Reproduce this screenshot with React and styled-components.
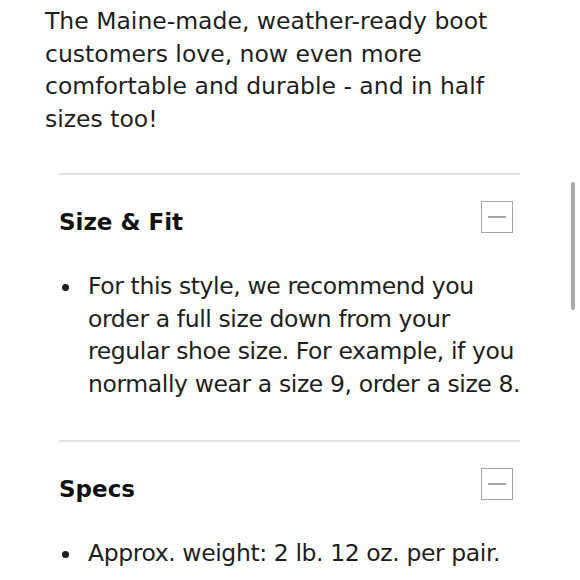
import React from "react";
import styled, { createGlobalStyle } from "styled-components";

const GlobalStyle = createGlobalStyle`
  html, body {
    margin: 0;
    padding: 0;
    background: #fff;
    overflow: hidden;
  }
  body {
    font-family: "DejaVu Sans", "Liberation Sans", sans-serif;
    color: #1e1e1e;
  }
`;

const Page = styled.div`
  position: relative;
  width: 580px;
  height: 580px;
  overflow: hidden;
  padding: 5px 0 0 45px;
  box-sizing: border-box;
`;

const Intro = styled.p`
  margin: 0;
  width: 480px;
  font-size: 23.5px;
  line-height: 32.5px;
  color: #1e1e1e;
`;

const Accordion = styled.div`
  margin: 38px 0 0 14px;
  width: 461px;
`;

const Section = styled.section`
  border-top: 2px solid #e1e1e1;
  padding-bottom: 40px;
`;

const Header = styled.div`
  display: flex;
  justify-content: space-between;
  align-items: flex-start;
  padding-top: 26px;
`;

const Heading = styled.h3`
  margin: 3px 0 0;
  font-size: 23px;
  line-height: 36px;
  font-weight: 700;
  color: #111;
`;

const Toggle = styled.button`
  width: 32px;
  height: 32px;
  margin-right: 7px;
  padding: 0;
  border: 1.5px solid #a4a4a4;
  background: #fff;
  display: flex;
  align-items: center;
  justify-content: center;
  cursor: pointer;

  &::after {
    content: "";
    width: 18px;
    height: 2px;
    background: #a4a4a4;
  }
`;

const List = styled.ul`
  list-style: none;
  margin: 30px -6px 0 0;
  padding: 0;
`;

const Item = styled.li`
  position: relative;
  padding-left: 29px;
  font-size: 23.5px;
  line-height: 32.5px;
  letter-spacing: -0.4px;
  color: #1e1e1e;

  &::before {
    content: "";
    position: absolute;
    left: 3px;
    top: 14px;
    width: 7px;
    height: 7px;
    border-radius: 50%;
    background: #1e1e1e;
  }
`;

const Scrollbar = styled.div`
  position: absolute;
  left: 571px;
  top: 182px;
  width: 4px;
  height: 128px;
  border-radius: 2px;
  background: #a9a9a9;
`;

const sections = [
  {
    title: "Size & Fit",
    items: [
      "For this style, we recommend you order a full size down from your regular shoe size. For example, if you normally wear a size 9, order a size 8.",
    ],
  },
  {
    title: "Specs",
    items: ["Approx. weight: 2 lb. 12 oz. per pair."],
  },
];

export default function App() {
  return (
    <>
      <GlobalStyle />
      <Page>
        <Intro>
          The Maine-made, weather-ready boot customers love, now even more
          comfortable and durable - and in half sizes too!
        </Intro>
        <Accordion>
          {sections.map((s) => (
            <Section key={s.title}>
              <Header>
                <Heading>{s.title}</Heading>
                <Toggle aria-label="Collapse" />
              </Header>
              <List>
                {s.items.map((t) => (
                  <Item key={t}>{t}</Item>
                ))}
              </List>
            </Section>
          ))}
        </Accordion>
        <Scrollbar />
      </Page>
    </>
  );
}
